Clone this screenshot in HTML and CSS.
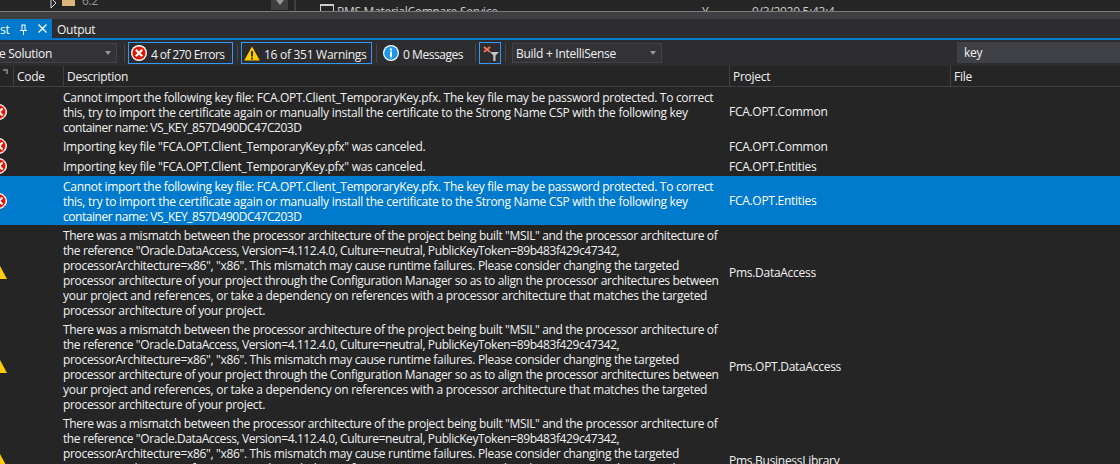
FILE: index.html
```html
<!DOCTYPE html>
<html lang="en">
<head>
<meta charset="utf-8">
<title>Error List</title>
<link rel="stylesheet" href="styles.css">
</head>
<body>
<div class="top">
  <svg class="tri" width="8" height="12" viewBox="0 0 8 12"><path d="M1 1l5 5-5 5z" fill="none" stroke="#ddd"/></svg>
  <span class="folder"></span>
  <span class="ver">6.2</span>
  <span class="thumb"><svg width="10" height="6" viewBox="0 0 10 6"><path d="M1 0h8L5 5z" fill="#999"/></svg></span>
  <span class="vdiv"></span>
  <span class="file-ic"></span>
  <span class="pms">PMS.MaterialCompare.Service</span>
  <span class="y">Y</span>
  <span class="date">9/3/2020 5:43:4</span>
</div>
<div class="sash"></div>
<div class="tabs">
  <div class="tab active">
    <span class="tab-name">st</span>
    <svg class="pin" width="9" height="11" viewBox="0 0 9 11"><path d="M2.500 1h4M3 1v5M6 1v5M1 6.500h7M4.500 7v4" fill="none" stroke="#fff"/></svg>
    <svg class="close" width="9" height="9" viewBox="0 0 9 9"><path d="M.5.500l8 8M8.500.500l-8 8" stroke="#fff" stroke-width="1.300"/></svg>
  </div>
  <div class="tab">Output</div>
</div>
<div class="toolbar">
  <div class="combo scope"><span class="scope-text">e Solution</span><i class="caret"></i></div>
  <span class="tsep s1"></span>
  <div class="tbtn errors">
    <svg width="16" height="16" viewBox="0 0 16 16"><circle cx="8" cy="8" r="8" fill="#fff"/><circle cx="8" cy="8" r="6.600" fill="#e51400"/><path d="M4.800 4.800l6.400 6.400M11.200 4.800l-6.400 6.400" stroke="#fff" stroke-width="2.200"/></svg>
    <span class="lbl tight">4 of 270 Errors</span>
  </div>
  <span class="tsep s2"></span>
  <div class="tbtn warnings">
    <svg width="16" height="15" viewBox="0 0 16 15"><path d="M8 .500L15.800 14.500H.200z" fill="#fc0"/><path d="M8 5v5.500M8 11.500v2" stroke="#111" stroke-width="1.600"/></svg>
    <span class="lbl">16 of 351 Warnings</span>
  </div>
  <span class="tsep s3"></span>
  <div class="tmsg">
    <svg width="16" height="16" viewBox="0 0 16 16"><circle cx="8" cy="8" r="8" fill="#fff"/><circle cx="8" cy="8" r="6.800" fill="#1c97ea"/><path d="M8 3.500v2M8 6.500v6" stroke="#fff" stroke-width="2"/></svg>
    <span class="lbl msg">0 Messages</span>
  </div>
  <span class="tsep s4"></span>
  <div class="filter">
    <svg width="16" height="15" viewBox="0 0 16 15"><path d="M1 1l6 5M7 1L1 6" stroke="#f0705a" stroke-width="2"/><path d="M7 6h9l-3.500 3.500V15h-2.200V9.500z" fill="#c4c4c4"/></svg>
  </div>
  <span class="tsep s5"></span>
  <div class="combo build"><span class="lbl">Build + IntelliSense</span><i class="caret"></i></div>
  <div class="search">key</div>
</div>
<div class="header">
  <div class="h-ic"><svg width="5" height="5" viewBox="0 0 5 5"><path d="M0 0h5v5h-2V2H0z" fill="#777"/></svg></div>
  <div class="h-code">Code</div>
  <div class="h-desc">Description</div>
  <div class="h-proj">Project</div>
  <div class="h-file">File</div>
</div>
<div class="rows">
  <div class="row">
    <i class="ic err"></i>
    <div class="desc"><span class="ln e1">Cannot import the following key file: FCA.OPT.Client_TemporaryKey.pfx. The key file may be password protected. To correct</span><span class="ln e2">this, try to import the certificate again or manually install the certificate to the Strong Name CSP with the following key</span><span class="ln e3">container name: VS_KEY_857D490DC47C203D</span></div>
    <div class="proj">FCA.OPT.Common</div>
  </div>
  <div class="row single">
    <i class="ic err"></i>
    <div class="desc">Importing key file "FCA.OPT.Client_TemporaryKey.pfx" was canceled.</div>
    <div class="proj">FCA.OPT.Common</div>
  </div>
  <div class="row single">
    <i class="ic err"></i>
    <div class="desc">Importing key file "FCA.OPT.Client_TemporaryKey.pfx" was canceled.</div>
    <div class="proj">FCA.OPT.Entities</div>
  </div>
  <div class="row selected">
    <i class="ic err"></i>
    <div class="desc"><span class="ln e1">Cannot import the following key file: FCA.OPT.Client_TemporaryKey.pfx. The key file may be password protected. To correct</span><span class="ln e2">this, try to import the certificate again or manually install the certificate to the Strong Name CSP with the following key</span><span class="ln e3">container name: VS_KEY_857D490DC47C203D</span></div>
    <div class="proj">FCA.OPT.Entities</div>
  </div>
  <div class="row">
    <i class="ic warn"></i>
    <div class="desc"><span class="ln w1">There was a mismatch between the processor architecture of the project being built "MSIL" and the processor architecture of</span><span class="ln w2">the reference "Oracle.DataAccess, Version=4.112.4.0, Culture=neutral, PublicKeyToken=89b483f429c47342,</span><span class="ln w3">processorArchitecture=x86", "x86". This mismatch may cause runtime failures. Please consider changing the targeted</span><span class="ln w4">processor architecture of your project through the Configuration Manager so as to align the processor architectures between</span><span class="ln w5">your project and references, or take a dependency on references with a processor architecture that matches the targeted</span><span class="ln w6">processor architecture of your project.</span></div>
    <div class="proj">Pms.DataAccess</div>
  </div>
  <div class="row">
    <i class="ic warn"></i>
    <div class="desc"><span class="ln w1">There was a mismatch between the processor architecture of the project being built "MSIL" and the processor architecture of</span><span class="ln w2">the reference "Oracle.DataAccess, Version=4.112.4.0, Culture=neutral, PublicKeyToken=89b483f429c47342,</span><span class="ln w3">processorArchitecture=x86", "x86". This mismatch may cause runtime failures. Please consider changing the targeted</span><span class="ln w4">processor architecture of your project through the Configuration Manager so as to align the processor architectures between</span><span class="ln w5">your project and references, or take a dependency on references with a processor architecture that matches the targeted</span><span class="ln w6">processor architecture of your project.</span></div>
    <div class="proj">Pms.OPT.DataAccess</div>
  </div>
  <div class="row">
    <i class="ic warn"></i>
    <div class="desc"><span class="ln w1">There was a mismatch between the processor architecture of the project being built "MSIL" and the processor architecture of</span><span class="ln w2">the reference "Oracle.DataAccess, Version=4.112.4.0, Culture=neutral, PublicKeyToken=89b483f429c47342,</span><span class="ln w3">processorArchitecture=x86", "x86". This mismatch may cause runtime failures. Please consider changing the targeted</span><span class="ln w4">processor architecture of your project through the Configuration Manager so as to align the processor architectures between</span><span class="ln w5">your project and references, or take a dependency on references with a processor architecture that matches the targeted</span><span class="ln w6">processor architecture of your project.</span></div>
    <div class="proj">Pms.BusinessLibrary</div>
  </div>
</div>
</body>
</html>
```
FILE: styles.css
```css
* { box-sizing: border-box; }
html, body { margin: 0; padding: 0; }
body {
  width: 1120px; height: 464px; overflow: hidden; background: #252526;
  color: #f1f1f1; font: 12px/15px "Open Sans", "Liberation Sans", sans-serif;
  letter-spacing: -0.28px;
}
.top { height: 11px; background: #252526; display: flex; align-items: flex-start; overflow: hidden; position: relative; color: #ccc; }
.tri { position: absolute; left: 50px; top: -3px; }
.folder { position: absolute; left: 62px; top: 0; width: 13px; height: 6px; background: #dcb67a; }
.ver { position: absolute; left: 82px; top: -7px; color: #999; }
.thumb { position: absolute; left: 271px; top: 0; width: 17px; height: 10px; background: #3e3e40; text-align: center; line-height: 0; }
.vdiv { position: absolute; left: 294px; top: 0; width: 2px; height: 11px; background: #3f3f46; }
.file-ic { position: absolute; left: 320px; top: 4px; width: 14px; height: 10px; border: 1px solid #ccc; border-top-width: 2px; }
.pms { position: absolute; left: 337px; top: 4px; white-space: nowrap; }
.y { position: absolute; left: 702px; top: 4px; }
.date { position: absolute; left: 752px; top: 4px; white-space: nowrap; }
.sash { height: 8px; background: #3f3f42; border-top: 1px solid #7a7a7a; }
.tabs { height: 21px; background: #2d2d30; display: flex; border-bottom: 2px solid #007acc; }
.tab { padding: 0 0 0 5px; line-height: 21px; }
.tab.active { width: 52px; background: #007acc; color: #fff; padding: 0; position: relative; }
.tab-name { position: absolute; left: 0; top: 0; }
.pin { position: absolute; left: 19px; top: 5px; }
.close { position: absolute; left: 38px; top: 5px; }
.toolbar { height: 26px; background: #2d2d30; position: relative; }
.lbl { padding-top: 2px; }
.tight { letter-spacing: -0.6px; }
.msg { letter-spacing: -0.45px; }
.combo { position: absolute; top: 3px; height: 20px; border: 1px solid #434346; background: #333337; line-height: 18px; display: flex; align-items: center; }
.scope { left: -40px; width: 157px; }
.scope-text { position: absolute; left: 38px; top: 1px; white-space: nowrap; }
.build { left: 512px; width: 150px; padding-left: 3px; }
.caret { position: absolute; right: 5px; top: 7px; width: 0; height: 0; border: 3.500px solid transparent; border-top: 4px solid #999; border-bottom: 0; }
.tsep { position: absolute; top: 4px; height: 18px; width: 1px; background: #46464a; }
.s1 { left: 124px; } .s2 { left: 237px; } .s3 { left: 376px; } .s4 { left: 475px; } .s5 { left: 505px; }
.tbtn { position: absolute; top: 2px; height: 22px; border: 1px solid #3399ff; background: #2b2b2d; display: flex; align-items: center; gap: 4px; padding-left: 2px; white-space: nowrap; }
.errors { left: 128px; width: 105px; }
.warnings { left: 241px; width: 131px; gap: 4px; padding-left: 2px; }
.tmsg { position: absolute; left: 383px; top: 3px; height: 20px; display: flex; align-items: center; gap: 4px; white-space: nowrap; }
.filter { position: absolute; left: 479px; top: 2px; width: 22px; height: 22px; border: 1px solid #3399ff; padding: 3px 0 0 3px; }
.filter svg { display: block; }
.search { position: absolute; left: 957px; top: 2px; width: 163px; height: 21px; background: #3f3f46; padding-left: 7px; line-height: 22px; }
.header { height: 21px; background: #252526; border-bottom: 1px solid #3f3f46; display: flex; line-height: 22px; }
.header > div { border-left: 1px solid #3f3f46; padding-left: 3px; height: 20px; }
.h-ic { width: 13px; border-left: 0 !important; position: relative; padding: 0 !important; }
.h-ic svg { position: absolute; left: 3px; top: 3px; }
.h-code { width: 50px; }
.h-desc { width: 666px; }
.h-proj { width: 221px; }
.h-file { flex: 1; }
.rows { display: flex; flex-direction: column; }
.row { display: flex; align-items: center; min-height: 20px; padding: 3px 0 1px; position: relative; background: #252526; }
.row.single { padding: 2px 0; }
.row.selected { background: #007acc; color: #fff; }
.desc { margin-left: 63px; width: 666px; white-space: nowrap; }
.ln { display: block; }
.e1 { letter-spacing: -0.30px; }
.e2 { letter-spacing: -0.27px; }
.e3 { letter-spacing: -0.455px; }
.w1 { letter-spacing: -0.352px; }
.w2 { letter-spacing: -0.404px; }
.w3 { letter-spacing: -0.323px; }
.w4 { letter-spacing: -0.345px; }
.w5 { letter-spacing: -0.28px; }
.w6 { letter-spacing: -0.33px; }
.proj { white-space: nowrap; padding-bottom: 2px; }
.single .proj { padding-bottom: 0; }
.ic { position: absolute; left: -9px; top: 50%; width: 16px; height: 16px; margin-top: -8px; }
.ic.err { background: #e51400; border-radius: 50%; border: 1px solid #fff; box-shadow: inset 0 0 0 .5px #fff; }
.ic.err::before, .ic.err::after { content: ""; position: absolute; left: 2px; top: 6px; width: 10px; height: 2px; background: #fff; }
.ic.err::before { transform: rotate(45deg); }
.ic.err::after { transform: rotate(-45deg); }
.ic.warn { left: -9px; width: 0; height: 0; margin-top: -8px; border-left: 8px solid transparent; border-right: 8px solid transparent; border-bottom: 15px solid #fc0; }
```
